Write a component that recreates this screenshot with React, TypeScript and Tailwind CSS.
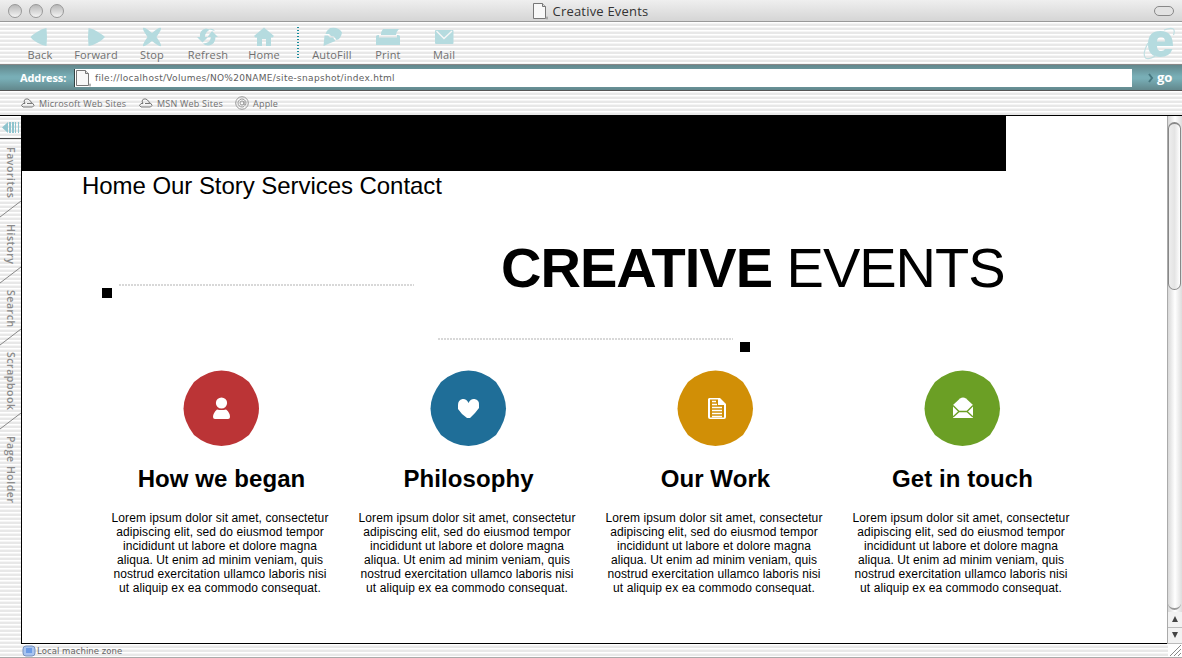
import React from "react";

const stripes =
  "bg-[repeating-linear-gradient(to_bottom,#ffffff_0px,#ffffff_1px,#f5f5f5_1px,#f5f5f5_2px,#e8e8e8_2px,#e8e8e8_4px)]";
const ui = "font-['Open_Sans','Noto_Sans',sans-serif]";
const arial = "font-['Liberation_Sans',Arial,sans-serif]";

function PageIcon() {
  return (
    <svg width="16" height="18" viewBox="0 0 16 18" className="shrink-0">
      <path d="M1.500 1.500h9l3 3v12h-12z" fill="#f8f8f8" stroke="#777" />
      <path d="M10.500 1.500v3h3" fill="#ddd" stroke="#777" />
      <path d="M15 14.500v3M13.500 16h2.500" stroke="#999" />
    </svg>
  );
}

const tools = [
  { label: "Back", icon: <path d="M18.500 1Q14 1.500 9 5 4 8 2.500 10 4 12.500 9 15.500 14 18.500 18.500 19 19.500 10 18.500 1z" /> },
  { label: "Forward", icon: <path d="M4.500 1Q9 1.500 14 5 19 8 21 10 19 12.500 14 15.500 9 18.500 4.500 19 3.500 10 4.500 1z" /> },
  { label: "Stop", icon: <path d="M3 1Q5 0 12 6 19 0 21 1 22 2 16.500 10 22 18 21 19 19 20 12 14 5 20 3 19 2 18 7.500 10 2 2 3 1z" /> },
  {
    label: "Refresh",
    icon: (
      <>
        <path d="M1 10h3Q3 3 10 1.500l4 1Q9 5 9 10h3l-5.500 5.500z" />
        <path d="M16 4l6 6h-2.500q0 7-6.500 8.500-4 .5-6-2 7 0 8-6.500h-3.500zM13 2q4-1 6 2l-2-.5z" />
      </>
    ),
  },
  { label: "Home", icon: <path d="M12 .5L22 9l-1.500 1.500H19V19h-5v-7h-4v7H5v-8.500H3.500L2 9z" /> },
];

const tools2 = [
  {
    label: "AutoFill",
    icon: (
      <>
        <path d="M10 1Q19-.5 22 5.500 21 12 16.500 13L14 9.500l-3-.5-2-2H5.500Q7 3 10 1z" />
        <path d="M4.500 8.500H8l2 2h3L15.500 14Q10 16 3.500 19z" />
      </>
    ),
  },
  { label: "Print", icon: <path d="M7 2h16q-3 3-3 6H5q0-4 2-6zM0 9.500Q0 8 2 8h1v2.500h18V8h1q2 0 2 1.500V18H0z" /> },
  {
    label: "Mail",
    icon: (
      <>
        <rect x="3" y="3" width="18.500" height="14" rx="1" />
        <path d="M4.500 4l7.500 7.500L20 4" fill="none" stroke="#f6f6f6" strokeWidth="1.400" />
      </>
    ),
  },
];

function Tool({ label, icon }: { label: string; icon: React.ReactNode }) {
  return (
    <div className="flex w-14 shrink-0 flex-col items-center">
      <svg width="24" height="20" viewBox="0 0 24 20" fill="#b5dbdf">
        {icon}
      </svg>
      <span className="mt-[1px] text-[11px] leading-[14px] font-medium tracking-[0.15px] whitespace-nowrap text-[#707070]">{label}</span>
    </div>
  );
}

function Cloud() {
  return (
    <svg width="14" height="10" viewBox="0 0 14 10" fill="none" stroke="#777" className="shrink-0">
      <path d="M4 5.500H2L.5 7.500 2 9h9.500L13 7.500l-1-2-2-.5M4 5.500L3 3l1.500-2L7 1l3 2.500.5 2H6" />
    </svg>
  );
}

const features = [
  {
    title: "How we began",
    color: "#bb3436",
    icon: (
      <>
        <circle cx="38.500" cy="33" r="5.600" />
        <path d="M34 39.500q4.500 1 9 0 4 3 4 7.500 0 2-2 2H32q-2 0-2-2 0-4 4-7.500z" />
      </>
    ),
  },
  {
    title: "Philosophy",
    color: "#1f6e98",
    icon: <path d="M38.500 33q2-4.500 6-4 5 1 4.500 6v3l-4 5-5 5h-3l-5-4-4-5v-4q0-5 4.500-6 4-.5 6 4z" />,
  },
  {
    title: "Our Work",
    color: "#d18f06",
    icon: (
      <>
        <path d="M32 28h11l6 6v13q0 2-2 2H33q-2 0-2-2V29z" />
        <path d="M33 29.500H41V35h6v12.500H33z" fill="#d18f06" />
        <path d="M35 31.500h4M35 34.500h5M35 37.500h10M35 40.500h10M35 43.500h10M35 46.500h10" stroke="#fff" strokeWidth="1.400" />
      </>
    ),
  },
  {
    title: "Get in touch",
    color: "#6b9f25",
    icon: (
      <>
        <path d="M29 35l7-6.500q3-2 6 0l7 6.500v13H29z" />
        <path d="M29 35.500l6 6h8l6-6M29 47l6-5.500M49 47l-6-5.500" fill="none" stroke="#6b9f25" strokeWidth="1.400" />
      </>
    ),
  },
];

const copy = [
  "Lorem ipsum dolor sit amet, consectetur",
  "adipiscing elit, sed do eiusmod tempor",
  "incididunt ut labore et dolore magna",
  "aliqua. Ut enim ad minim veniam, quis",
  "nostrud exercitation ullamco laboris nisi",
  "ut aliquip ex ea commodo consequat.",
];

const tabs = [
  { name: "Favorites", cls: "h-[79px] pt-[8px]", line: true },
  { name: "History", cls: "h-[66px] pt-[6px]", line: true },
  { name: "Search", cls: "h-[62px] pt-[6px]", line: true },
  { name: "Scrapbook", cls: "h-[84px] pt-[6px]", line: true },
  { name: "Page Holder", cls: "h-[90px] pt-[6px]", line: false },
];

export default function App() {
  return (
    <div className={`flex h-[658px] w-[1182px] flex-col overflow-hidden bg-white ${ui}`}>
      <header className="flex h-[22px] shrink-0 items-center border-b border-[#999] bg-linear-to-b from-[#efefef] to-[#d5d5d5] pr-[8px] pl-[8px]">
        <div className="flex w-[100px] gap-[7px]">
          {[0, 1, 2].map((i) => (
            <span key={i} className="size-[14px] rounded-full border border-[#999] bg-linear-to-b from-[#b8b8b8] to-[#f4f4f4]" />
          ))}
        </div>
        <div className="flex flex-1 items-center justify-center gap-[5px] pr-[82px] text-[13px] text-[#333]">
          <PageIcon />
          <span className="pt-[2px] tracking-[0.200px] whitespace-nowrap">Creative Events</span>
        </div>
        <span className="h-[10px] w-5 rounded-full border border-[#888] bg-[#e2e2e2]" />
      </header>

      <div className={`flex h-[42px] shrink-0 pt-[5px] pl-3 ${stripes}`}>
        {tools.map((t) => (
          <Tool key={t.label} label={t.label} icon={t.icon} />
        ))}
        <div className="flex w-3 justify-center">
          <div className="h-8 w-[2px] bg-[repeating-linear-gradient(to_bottom,#178c9c_0px,#178c9c_1px,transparent_1px,transparent_3px)]" />
        </div>
        {tools2.map((t) => (
          <Tool key={t.label} label={t.label} icon={t.icon} />
        ))}
        <svg width="34" height="34" viewBox="0 0 34 34" className="mr-[5px] ml-auto">
          <path d="M30 19H14q0 5 4 5 3 0 4-2h7.500q-3 8-12 8Q5 30 5 17 5 4 17.500 4 30 4 30 19zM14 14.500h8q0-4.500-4-4.500T14 14.500z" fill="#b5dbdf" fillRule="evenodd" />
          <path d="M21 3Q34-2 30.500 8M5 16Q-1 27 2.500 31 6 33 13 28.500" fill="none" stroke="#c0dfe2" strokeWidth="1.200" />
        </svg>
      </div>

      <div className="flex h-[27px] shrink-0 items-center border-t border-b border-t-[#888] border-b-[#555] bg-[linear-gradient(to_bottom,#62878c,#78aeb6_45%,#78aeb6_55%,#62878c)] text-white">
        <span className="w-[74px] pt-[1px] pl-5 text-[11px] font-bold tracking-[-0.100px] whitespace-nowrap">Address:</span>
        <div className="flex h-[18px] w-[1058px] items-center gap-[4px] border-l border-[#344] bg-white">
          <PageIcon />
          <span className="pt-[2px] font-['DejaVu_Sans',sans-serif] text-[9px] tracking-[0.300px] whitespace-nowrap text-[#606060]">
            file://localhost/Volumes/NO%20NAME/site-snapshot/index.html
          </span>
        </div>
        <svg width="6" height="10" viewBox="0 0 6 10" className="ml-[16px]"><path d="M1 1l3 4-3 4" fill="none" stroke="#477880" strokeWidth="2" /></svg>
        <span className="ml-[3px] pb-[2px] text-[13px] leading-[18px] font-bold">go</span>
      </div>

      <div className={`flex h-[25px] shrink-0 items-center border-b border-black pl-[21px] text-[9px] tracking-[0.220px] text-[#707070] ${stripes}`}>
        <Cloud />
        <span className="ml-1 w-[100px] pt-[1px] whitespace-nowrap">Microsoft Web Sites</span>
        <Cloud />
        <span className="ml-1 w-[78px] pt-[1px] whitespace-nowrap">MSN Web Sites</span>
        <svg width="14" height="14" viewBox="0 0 14 14" fill="none" stroke="#999">
          <circle cx="7" cy="7" r="6.300" />
          <circle cx="7" cy="7" r="2" />
          <path d="M9 5v4q2 1 2-2a4 4 0 1 0-2 3.500" />
        </svg>
        <span className="ml-[4px] pt-[1px]">Apple</span>
      </div>

      <div className="flex h-[528px] shrink-0">
        <aside className={`w-[22px] shrink-0 border-r border-black ${stripes}`}>
          <div className="flex h-[23px] items-center border-b border-[#444] pl-[2px]">
            <svg width="17" height="13" viewBox="0 0 17 13"><path d="M0 6.500L6 1v11zM7 1h2v11H7zM10 1h2v11h-2zM13 1h1v11h-1zM16 1h1v11h-1z" fill="#8fc4ce" /></svg>
          </div>
          {tabs.map((t) => (
            <div key={t.name} className={`relative flex ${t.cls}`}>
              <span className="ml-[3px] w-4 text-[10.500px] leading-4 font-semibold tracking-[0.550px] whitespace-nowrap text-[#8c8c8c] [writing-mode:vertical-rl]">{t.name}</span>
              {t.line && (
                <svg width="21" height="18" viewBox="0 0 21 18" className="absolute bottom-0 left-0"><path d="M0 17L21 1" stroke="#888" /></svg>
              )}
            </div>
          ))}
        </aside>

        <main className={`w-[1145px] shrink-0 overflow-hidden border-b border-black bg-white text-black ${arial}`}>
          <div className="h-[55px] w-[984px] bg-black" />
          <nav className="flex h-[30px] items-center gap-[6.600px] pl-[60px] text-[24px] tracking-[-0.050px] whitespace-nowrap">
            <span>Home</span>
            <span>Our Story</span>
            <span>Services</span>
            <span>Contact</span>
          </nav>
          <section className="flex h-[169px]">
            <div className="flex w-[392px] pt-[83px] pl-[80px]">
              <span className="mt-[4px] size-[10px] bg-black" />
              <span className="ml-[7px] h-[2px] w-[295px] bg-[repeating-linear-gradient(to_right,#d8d8d8_0px,#d8d8d8_2px,transparent_2px,transparent_3px)]" />
            </div>
            <div className="flex flex-col pt-[18px]">
              <h1 className="ml-[87px] h-[98px] text-[56px] leading-[98px] tracking-[-1px] whitespace-nowrap">
                <b>CREATIVE</b> EVENTS
              </h1>
              <div className="ml-[24px] flex pt-[21px]">
                <span className="h-[2px] w-[295px] bg-[repeating-linear-gradient(to_right,#d8d8d8_0px,#d8d8d8_2px,transparent_2px,transparent_3px)]" />
                <span className="mt-[4px] ml-[7px] size-[10px] bg-black" />
              </div>
            </div>
          </section>
          <section className="flex pl-[75px]">
            {features.map((f) => (
              <article key={f.title} className="flex w-[247px] flex-col items-center">
                <svg width="77" height="77" viewBox="0 0 77 77" fill="#fff" className="ml-[1px]">
                  <path d="M38.500 .5Q53 .5 66 12Q76 26 76 38.500Q76 51 66 65Q53 76 38.500 76Q24 76 11 65Q.5 51 .5 38.500Q.5 26 11 12Q24 .5 38.500 .5z" fill={f.color} />
                  {f.icon}
                </svg>
                <h2 className="mt-[17px] ml-[2px] text-[24px] leading-[30px] font-bold tracking-[0.080px] whitespace-nowrap">{f.title}</h2>
                <p className="mt-[17px] mr-[1px] text-center text-[12px] leading-[14px] tracking-[0.090px] whitespace-nowrap">
                  {copy.map((line) => (
                    <span key={line} className="block">{line}</span>
                  ))}
                </p>
              </article>
            ))}
          </section>
        </main>

        <div className="flex w-[15px] flex-col border-l border-[#aaa] bg-[#eee]">
          <div className="h-[496px] bg-linear-to-r from-[#d8d8d8] via-[#fff] to-[#ddd] pt-[6px]">
            <div className="h-[168px] w-[13px] rounded-full border-x border-t-2 border-b border-[#888] bg-linear-to-r from-[#eee] via-[#e4e4e4] to-[#fff]" />
            <div className="mt-[306px] h-[14px] w-[13px] rounded-b-full border-b-2 border-[#999]" />
          </div>
          <svg width="14" height="32" viewBox="0 0 14 32">
            <path d="M0 0h14v32H0z" fill="#f2f2f2" />
            <path d="M0 15.500h14M0 31.500h14" stroke="#bbb" />
            <path d="M4 10l3-6 3 6zM4 20h6l-3 6z" fill="#444" />
          </svg>
        </div>
      </div>

      <footer className={`flex h-[14px] shrink-0 items-center border-b border-[#aaa] pl-[22px] ${stripes}`}>
        <svg width="14" height="12" viewBox="0 0 14 12"><rect x="1" y="1" width="12" height="10" rx="3" fill="#a8c4ef" stroke="#7791bd" /><path d="M4 3h6v5H4z" fill="#6d9be5" /></svg>
        <span className="ml-[1px] pt-[1px] font-['DejaVu_Sans',sans-serif] text-[8.500px] leading-3 tracking-[0.060px] whitespace-nowrap text-[#666]">Local machine zone</span>
        <svg width="14" height="13" viewBox="0 0 14 13" className="ml-auto bg-white"><path d="M2 12L13 1M6 12l7-7M10 12l3-3" stroke="#888" /></svg>
      </footer>
    </div>
  );
}
